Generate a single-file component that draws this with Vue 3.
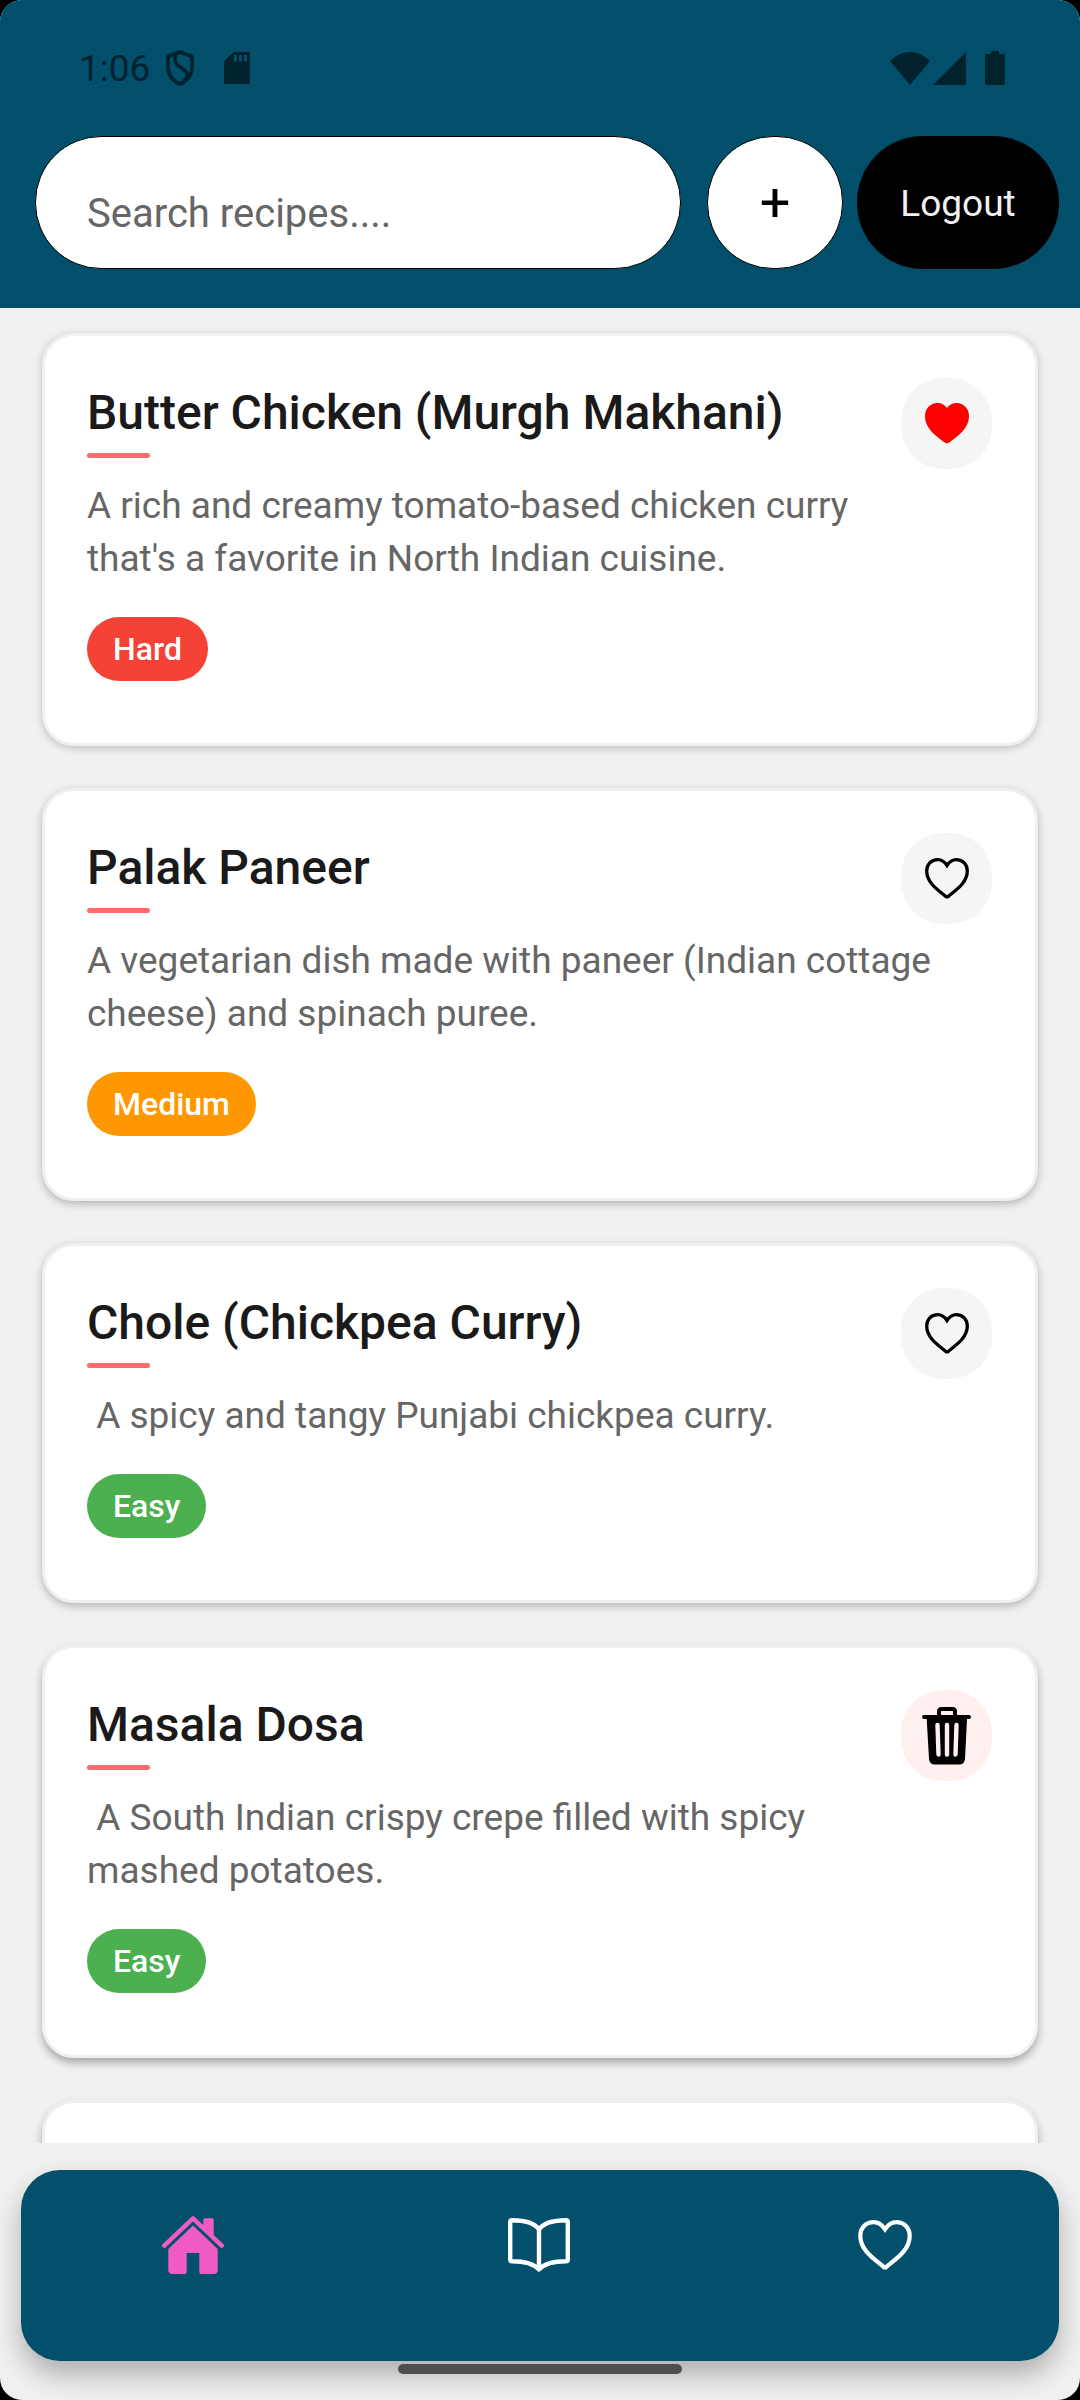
<script setup>
import { ref } from 'vue'

const search = ref('')

const recipes = ref([
  { id: 1, title: 'Butter Chicken (Murgh Makhani)', description: "A rich and creamy tomato-based chicken curry that's a favorite in North Indian cuisine.", level: 'Hard', favorite: true },
  { id: 2, title: 'Palak Paneer', description: 'A vegetarian dish made with paneer (Indian cottage cheese) and spinach puree.', level: 'Medium', favorite: false },
  { id: 3, title: 'Chole (Chickpea Curry)', description: ' A spicy and tangy Punjabi chickpea curry.', level: 'Easy', favorite: false },
  { id: 4, title: 'Masala Dosa', description: ' A South Indian crispy crepe filled with spicy mashed potatoes.', level: 'Easy', own: true },
])
</script>

<template>
  <div class="screen">
    <header class="top">
      <div class="status">
        <span class="clock">1:06</span>
        <svg class="shield" width="30" height="36" viewBox="0 0 30 36" fill="none" stroke="currentColor" stroke-width="3.600" stroke-linejoin="round">
          <path d="M15 2 L27 6.500 V17 C27 25 22 31 15 34 C8 31 3 25 3 17 V6.500 Z" />
          <path d="M11 4 C8 14 13 16 18 19 C24 23 23 27 19 31" />
        </svg>
        <svg class="card-icon" width="26" height="32" viewBox="0 0 26 32" fill="currentColor">
          <path fill-rule="evenodd" d="M9.500 0 H24 Q26 0 26 2 V30 Q26 32 24 32 H2 Q0 32 0 30 V9.500 Z M10 3 V9.500 H13 V3 Z M15 3 V9.500 H18 V3 Z M20 3 V9.500 H23 V3 Z" />
        </svg>
        <span class="spacer"></span>
        <svg width="40" height="33" viewBox="0 0 40 33" fill="currentColor"><path d="M0 9 Q9 0 20 0 Q31 0 40 9 L20 33 Z" /></svg>
        <svg class="signal" width="33" height="33" viewBox="0 0 33 33" fill="currentColor"><path d="M33 0 V33 H0 Z" /></svg>
        <svg class="battery" width="20" height="34" viewBox="0 0 20 34" fill="currentColor"><path d="M6 0 H14 V3 H18 Q20 3 20 5 V32 Q20 34 18 34 H2 Q0 34 0 32 V5 Q0 3 2 3 H6 Z" /></svg>
      </div>
      <div class="toolbar">
        <input v-model="search" class="search" type="text" aria-label="Search recipes" placeholder="Search recipes...." />
        <button class="add" type="button" aria-label="Add recipe">+</button>
        <button class="logout" type="button">Logout</button>
      </div>
    </header>

    <main class="list">
      <article v-for="recipe in recipes" :key="recipe.id" class="card">
        <div class="body">
          <h2 class="title">{{ recipe.title }}</h2>
          <div class="rule"></div>
          <p class="description">{{ recipe.description }}</p>
          <span class="badge" :class="recipe.level.toLowerCase()">{{ recipe.level }}</span>
        </div>
        <button v-if="recipe.own" class="action delete" type="button" aria-label="Delete recipe">
          <svg width="49" height="58" viewBox="0 0 49 58">
            <path d="M17 10 V4.500 Q17 2 19.500 2 H30.500 Q33 2 33 4.500 V10" fill="none" stroke="#000" stroke-width="4" />
            <path d="M2 8 H47 Q49 8 49 10 Q49 12 47 12 H45 L43 52 Q42.500 57.500 37 57.500 H13 Q7.500 57.500 7 52 L4.700 12 H2 Q0 12 0 10 Q0 8 2 8 Z" />
            <path d="M15.500 18 L16.500 47.500 M25 18 V47.500 M34.500 18 L33.500 47.500" fill="none" stroke="#ffefee" stroke-width="4.400" stroke-linecap="round" />
          </svg>
        </button>
        <button v-else class="action" type="button" aria-label="Favorite" :aria-pressed="recipe.favorite" @click="recipe.favorite = !recipe.favorite">
          <svg width="44" height="41" viewBox="0 0 44 41">
            <path v-if="recipe.favorite" fill="#f00" d="M22 5 C19.500 1.800 16.200 0 12.500 0 C5.300 0 0 5.600 0 13 C0 26 12 33.500 19.800 39.600 Q22 41.200 24.200 39.600 C32 33.500 44 26 44 13 C44 5.600 38.700 0 31.500 0 C27.800 0 24.500 1.800 22 5 Z" />
            <path v-else fill="none" stroke="#000" stroke-width="3.300" d="M22 7.500 C19.500 3.800 16.600 1.700 12.800 1.700 C6.200 1.700 1.700 6.600 1.700 13 C1.700 25 13.500 32.200 20.800 38.400 Q22 39.400 23.200 38.400 C30.500 32.200 42.300 25 42.300 13 C42.300 6.600 37.800 1.700 31.200 1.700 C27.400 1.700 24.500 3.800 22 7.500 Z" />
          </svg>
        </button>
      </article>
      <article class="card next"></article>
    </main>

    <footer class="bottom">
      <nav class="tabs">
        <a href="#home" aria-label="Home" aria-current="page">
          <svg width="62" height="62" viewBox="0 -2 62 62" fill="#f05bc5">
            <path d="M2.300 29.700 L31 2.300 L59.700 29.700" fill="none" stroke="#f05bc5" stroke-width="4.400" stroke-linecap="round" stroke-linejoin="round" />
            <path d="M41.300 12 V4 Q41.300 2.300 43 2.300 H50 Q51.700 2.300 51.700 4 V22 Z" />
            <path d="M31 9.500 L55.700 33 V54 Q55.700 58 51.700 58 H39 Q37.300 58 37.300 56.300 V37 H24.700 V56.300 Q24.700 58 23 58 H10.300 Q6.300 58 6.300 54 V33 Z" />
          </svg>
        </a>
        <a href="#recipes" aria-label="Recipes">
          <svg width="62" height="62" viewBox="0 -4 62 62" fill="none" stroke="#fff" stroke-width="4.400" stroke-linejoin="round">
            <path d="M31 11.500 C26 4 15 2.200 4 2.200 Q2.200 2.200 2.200 4 V41.500 Q2.200 43.300 4 43.300 C16 43.300 25 45 31 51.500 C37 45 46 43.300 58 43.300 Q59.800 43.300 59.800 41.500 V4 Q59.800 2.200 58 2.200 C47 2.200 36 4 31 11.500 Z M31 11.500 V51" />
          </svg>
        </a>
        <a href="#favorites" aria-label="Favorites">
          <svg width="54" height="62" viewBox="0 -5 44 51" fill="none" stroke="#fff" stroke-width="3.500">
            <path d="M22 7.500 C19.500 3.800 16.600 1.700 12.800 1.700 C6.200 1.700 1.700 6.600 1.700 13 C1.700 25 13.500 32.200 20.800 38.400 Q22 39.400 23.200 38.400 C30.500 32.200 42.300 25 42.300 13 C42.300 6.600 37.800 1.700 31.200 1.700 C27.400 1.700 24.500 3.800 22 7.500 Z" />
          </svg>
        </a>
      </nav>
      <div class="handle"></div>
    </footer>
  </div>
</template>

<style>
body {
  margin: 0;
  background: #000;
}
</style>

<style scoped>
.screen {
  display: flex;
  flex-direction: column;
  height: 100vh;
  overflow: hidden;
  border-radius: 22px;
  background: #f1f1f1;
  font-family: Roboto, sans-serif;
}

button {
  padding: 0;
  font-family: inherit;
}

svg {
  display: block;
}

.top {
  flex: none;
  padding-bottom: 39px;
  background: #014f6b;
}

.status {
  display: flex;
  align-items: center;
  height: 136px;
  padding: 0 75px 0 79px;
  color: #01212d;
}

.clock {
  font-size: 37px;
}

.shield {
  margin-left: 15px;
}

.card-icon {
  margin-left: 29px;
}

.spacer {
  flex: 1;
}

.signal {
  margin-left: 3px;
}

.battery {
  margin-left: 19px;
}

.toolbar {
  display: flex;
  height: 133px;
  padding: 0 21px 0 35px;
}

.search {
  flex: 1;
  min-width: 0;
  box-sizing: border-box;
  margin-right: 26px;
  padding: 22px 51px 0;
  border: 1px solid #000;
  border-radius: 66px;
  background: #fff;
  color: #1a1a1a;
  font-family: inherit;
  font-size: 40px;
}

.search::placeholder {
  color: #666;
  opacity: 1;
}

.add {
  width: 136px;
  margin-right: 14px;
  border: 1px solid #000;
  border-radius: 66px;
  background: #fff;
  color: #000;
  font-size: 54px;
}

.logout {
  width: 202px;
  padding-top: 2px;
  border: 0;
  border-radius: 66px;
  background: #000;
  color: #f1f1f1;
  font-size: 37px;
}

.list {
  display: flex;
  flex: 1;
  flex-direction: column;
  gap: 42px;
  min-height: 0;
  overflow: hidden;
  padding: 25px 42px 0;
}

.card {
  display: flex;
  flex: none;
  align-items: flex-start;
  justify-content: space-between;
  padding: 42px 43px 62px 42px;
  border: 3px solid #f0f0f0;
  border-radius: 32px;
  background: #fff;
  box-shadow: 0 2px 8px rgba(0, 0, 0, 0.22);
}

.card:nth-child(n + 2) {
  box-shadow: 0 3px 8px rgba(0, 0, 0, 0.26);
}

.card:nth-child(n + 4) {
  box-shadow: 0 5px 9px rgba(0, 0, 0, 0.3);
}

.next {
  min-height: 309px;
}

.body {
  width: 800px;
}

.title {
  margin: 0;
  color: #1a1a1a;
  font-size: 48px;
  font-weight: 500;
  line-height: 69px;
  white-space: nowrap;
}

.rule {
  width: 63px;
  height: 5px;
  margin-top: 6px;
  border-radius: 3px;
  background: #ff6b6b;
}

.description {
  width: 852px;
  margin: 21px 0 32px;
  color: #666;
  font-size: 37px;
  line-height: 53px;
  white-space: pre-wrap;
}

.badge {
  display: block;
  width: fit-content;
  padding: 0 26px;
  border-radius: 32px;
  color: #fff;
  font-size: 32px;
  font-weight: 500;
  line-height: 64px;
}

.hard {
  background: #f44336;
}

.medium {
  background: #ff9800;
}

.easy {
  background: #4caf50;
}

.action {
  display: flex;
  flex: none;
  align-items: center;
  justify-content: center;
  width: 91px;
  height: 91px;
  border: 0;
  border-radius: 42px;
  background: #f5f5f5;
}

.delete {
  background: #ffefee;
}

.bottom {
  flex: none;
  padding: 27px 21px 26px;
}

.tabs {
  display: flex;
  height: 191px;
  border-radius: 39px;
  background: #03506c;
  box-shadow: 0 14px 28px rgba(0, 0, 0, 0.28);
}

.tabs a {
  display: flex;
  flex: 1;
  justify-content: center;
  padding: 44px 2px 0 0;
}

.handle {
  width: 284px;
  height: 10px;
  margin: 3px auto 0;
  border-radius: 5px;
  background: #4e4e4e;
  z-index: 1;
}
</style>
